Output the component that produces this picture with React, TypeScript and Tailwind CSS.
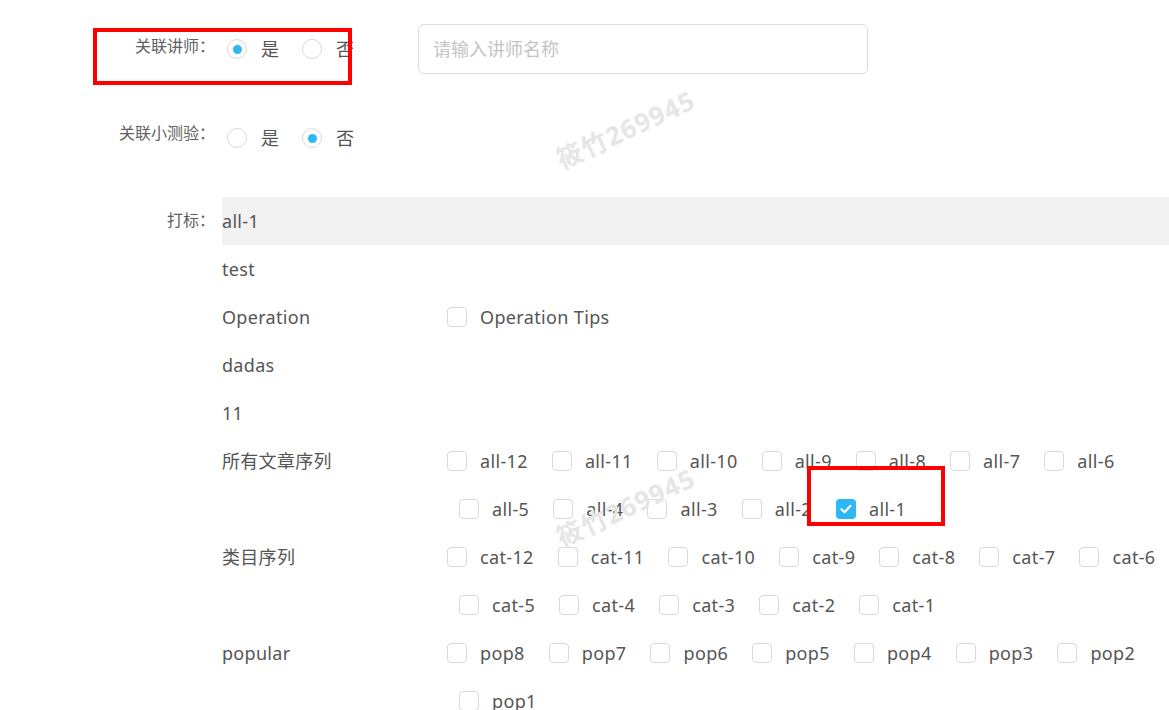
import { useState } from 'react';

type Group = { name: string; items: string[] };

const groups: Group[] = [
  { name: 'all-1', items: [] },
  { name: 'test', items: [] },
  { name: 'Operation', items: ['Operation Tips'] },
  { name: 'dadas', items: [] },
  { name: '11', items: [] },
  {
    name: '所有文章序列',
    items: ['all-12', 'all-11', 'all-10', 'all-9', 'all-8', 'all-7', 'all-6', 'all-5', 'all-4', 'all-3', 'all-2', 'all-1'],
  },
  {
    name: '类目序列',
    items: ['cat-12', 'cat-11', 'cat-10', 'cat-9', 'cat-8', 'cat-7', 'cat-6', 'cat-5', 'cat-4', 'cat-3', 'cat-2', 'cat-1'],
  },
  { name: 'popular', items: ['pop8', 'pop7', 'pop6', 'pop5', 'pop4', 'pop3', 'pop2', 'pop1'] },
];

const Radio = ({ checked, label, onClick }: { checked: boolean; label: string; onClick: () => void }) => (
  <label className="flex items-center cursor-pointer mr-[23px]" onClick={onClick}>
    <span className="w-[20px] h-[20px] rounded-full border border-[#d9d9d9] bg-white flex items-center justify-center">
      {checked && <span className="w-[9px] h-[9px] rounded-full bg-[#2db7f5]" />}
    </span>
    <span className="ml-[14px] text-[18px] leading-[24px] text-[#555]">{label}</span>
  </label>
);

const Checkbox = ({ checked, label, onClick }: { checked: boolean; label: string; onClick: () => void }) => (
  <label className="flex items-center h-[48px] mx-[12px] first:ml-0 cursor-pointer" onClick={onClick}>
    {checked ? (
      <span className="w-[20px] h-[20px] rounded-[4px] bg-[#2db7f5] flex items-center justify-center">
        <svg width="12" height="10" viewBox="0 0 12 10" fill="none">
          <path d="M1.5 5.2 4.6 8.2 10.5 1.8" stroke="white" strokeWidth="2.2" strokeLinecap="round" strokeLinejoin="round" />
        </svg>
      </span>
    ) : (
      <span className="w-[20px] h-[20px] rounded-[4px] border border-[#d9d9d9] bg-white" />
    )}
    <span className="ml-[13px] text-[18px] leading-[24px] tracking-[0.35px] text-[#555] whitespace-nowrap">{label}</span>
  </label>
);

const Watermark = ({ top }: { top: number }) => (
  <div
    className="absolute left-[558px] pointer-events-none select-none -rotate-[25deg] origin-left text-[26px] font-bold tracking-[1px] text-[#e6e6e6]"
    style={{ top }}
  >
    筱竹269945
  </div>
);

export default function App() {
  const [teacher, setTeacher] = useState(true);
  const [quiz, setQuiz] = useState(false);
  const [picked, setPicked] = useState<Record<string, boolean>>({ '所有文章序列/all-1': true });

  const toggle = (key: string) => setPicked((p) => ({ ...p, [key]: !p[key] }));

  return (
    <div
      className="relative w-full min-h-[710px] overflow-hidden bg-white"
      style={{ fontFamily: '"Noto Sans", "Noto Sans CJK SC", sans-serif' }}
    >
      <div className="w-[1200px] pt-[24px] pb-[10px]">
        {/* 关联讲师 */}
        <div className="flex h-[50px]">
          <div className="w-[215px] shrink-0 text-right text-[16px] leading-[24px] pt-[10px] text-[#606060]">关联讲师：</div>
          <div className="w-[203px] shrink-0 flex items-center pl-[12px]">
            <Radio checked={teacher} label="是" onClick={() => setTeacher(true)} />
            <Radio checked={!teacher} label="否" onClick={() => setTeacher(false)} />
          </div>
          <input
            className="w-[450px] h-[50px] rounded-[6px] border border-[#dcdcdc] px-[14px] text-[18px] text-[#555] placeholder:text-[#c4c4c4] outline-none"
            placeholder="请输入讲师名称"
          />
        </div>

        {/* 关联小测验 */}
        <div className="flex h-[48px] mt-[40px]">
          <div className="w-[215px] shrink-0 text-right text-[16px] leading-[24px] pt-[7px] text-[#606060]">关联小测验：</div>
          <div className="flex items-center pl-[12px]">
            <Radio checked={quiz} label="是" onClick={() => setQuiz(true)} />
            <Radio checked={!quiz} label="否" onClick={() => setQuiz(false)} />
          </div>
        </div>

        {/* 打标 */}
        <div className="flex mt-[35px]">
          <div className="w-[215px] shrink-0 text-right text-[16px] leading-[24px] pt-[11px] text-[#606060]">打标：</div>
          <div className="flex-1 ml-[7px]">
            {groups.map((g, i) => (
              <div key={g.name} className={`flex min-h-[48px] ${i === 0 ? 'bg-[#f2f2f2]' : ''}`}>
                <div className="w-[225px] shrink-0 text-[18px] leading-[48px] tracking-[0.3px] text-[#555]">{g.name}</div>
                <div className="flex flex-wrap flex-1">
                  {g.items.map((it) => (
                    <Checkbox
                      key={it}
                      label={it}
                      checked={!!picked[`${g.name}/${it}`]}
                      onClick={() => toggle(`${g.name}/${it}`)}
                    />
                  ))}
                </div>
              </div>
            ))}
          </div>
        </div>
      </div>

      <Watermark top={142} />
      <Watermark top={520} />

      {/* highlight frames */}
      <div className="absolute left-[93px] top-[28px] w-[259px] h-[57px] border-4 border-[#ff0000] pointer-events-none" />
      <div className="absolute left-[807px] top-[466px] w-[138px] h-[60px] border-4 border-[#ff0000] pointer-events-none" />
    </div>
  );
}
